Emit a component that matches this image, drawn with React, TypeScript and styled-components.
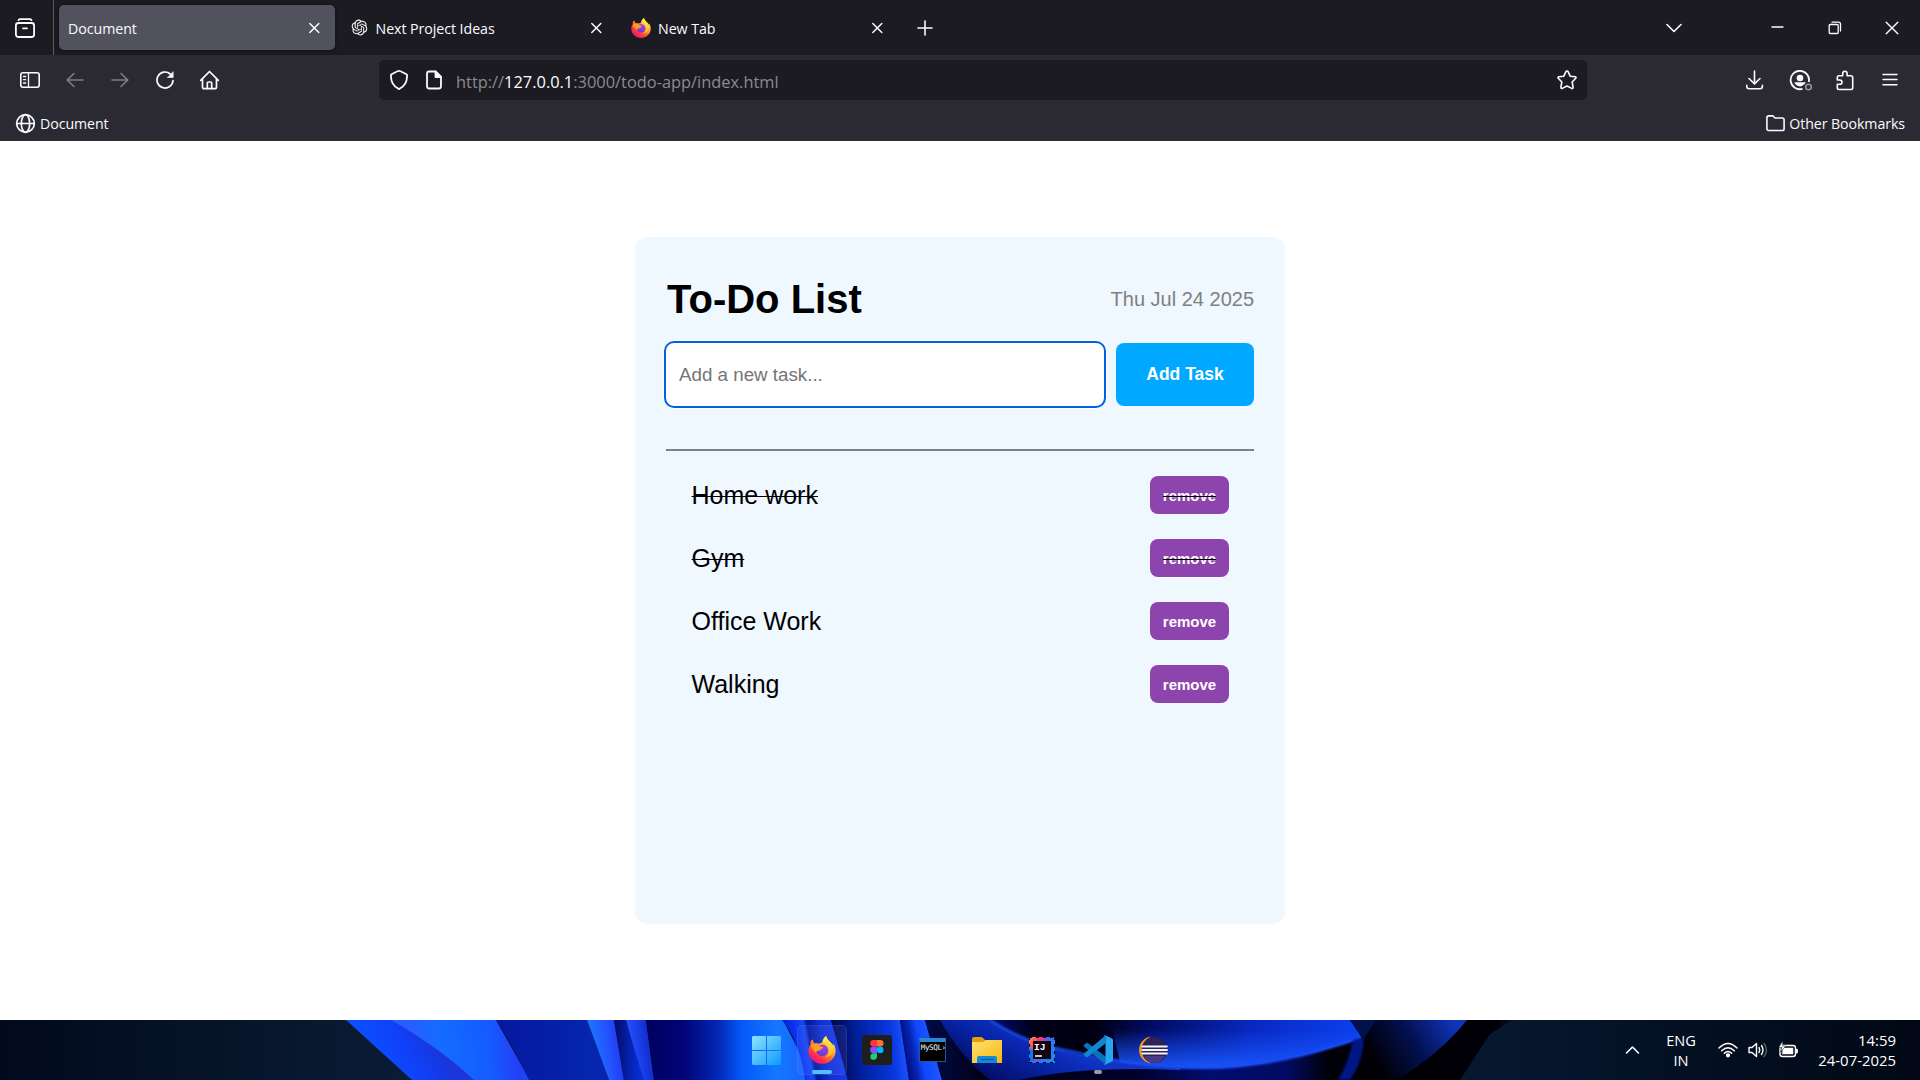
import React from "react";
import styled, { createGlobalStyle } from "styled-components";
import { RiOpenaiFill } from "react-icons/ri";

const ui = '"Open Sans", "Noto Sans", sans-serif';
const arial = '"Liberation Sans", Arial, sans-serif';

const GlobalStyle = createGlobalStyle`
  * { box-sizing: border-box; }
  body { margin: 0; background: #fff; font-family: ${arial}; overflow: hidden; }
  svg { display: block; flex: none; }
`;

const Screen = styled.div`
  width: 1920px;
  height: 1080px;
  display: flex;
  flex-direction: column;
  background: #fff;
`;

/* ---------- browser chrome ---------- */

const TabStrip = styled.header`
  height: 55px;
  display: flex;
  align-items: center;
  background: #1c1b22;
  color: #fbfbfe;
`;

const ViewButton = styled.div`
  width: 54px;
  height: 55px;
  display: flex;
  align-items: center;
  padding: 2px 0 0 15px;
  border-right: 1px solid #5a5a62;
  margin-right: 5px;
`;

const Tab = styled.div<{ $active?: boolean }>`
  width: 276px;
  height: 45px;
  margin-right: 5.5px;
  padding: 0 13px 0 9px;
  display: flex;
  align-items: center;
  gap: 7px;
  border-radius: 5px;
  background: ${(p) => (p.$active ? "#52525e" : "transparent")};
  box-shadow: ${(p) => (p.$active ? "0 0 4px rgba(0, 0, 0, 0.5)" : "none")};
`;

const TabTitle = styled.span`
  flex: 1;
  font: 14.2px/20px ${ui};
  letter-spacing: -0.05px;
  padding-top: 2px;
`;

const NewTab = styled.div`
  padding: 1px 0 0 13px;
`;

const WindowControls = styled.div`
  display: flex;
  align-items: center;
  margin-left: auto;
`;

const ControlCell = styled.div<{ $w: number }>`
  width: ${(p) => p.$w}px;
  display: flex;
  justify-content: center;
`;

const Toolbar = styled.div`
  height: 50px;
  display: flex;
  align-items: center;
  padding: 0 7.5px;
  background: #2b2a33;
  color: #fbfbfe;
`;

const ToolButton = styled.div<{ $dim?: boolean }>`
  width: 45px;
  height: 40px;
  display: flex;
  align-items: center;
  justify-content: center;
  color: ${(p) => (p.$dim ? "#7f7e86" : "#fbfbfe")};
`;

const UrlBar = styled.div`
  width: 1208px;
  height: 40px;
  margin: 0 auto 0 146.5px;
  padding: 0 10px;
  display: flex;
  align-items: center;
  border-radius: 5px;
  background: #1c1b22;
`;

const UrlText = styled.div`
  flex: 1;
  margin-left: -3px;
  padding-top: 3px;
  font: 16.4px/24px ${ui};
  color: #8b8a91;
  b { font-weight: 400; color: #fbfbfe; }
`;

const UrlIcon = styled.div`
  width: 35px;
  display: flex;
`;

const Bookmarks = styled.div`
  height: 36px;
  display: flex;
  justify-content: space-between;
  padding: 0 15px;
  background: #2b2a33;
  color: #fbfbfe;
`;

const Bookmark = styled.div`
  display: flex;
  align-items: center;
  height: 37px;
  gap: 4px;
  font: 14.2px/20px ${ui};
  letter-spacing: -0.08px;
`;

/* ---------- to-do page ---------- */

const Page = styled.main`
  flex: 1;
  display: flex;
  justify-content: center;
  padding-top: 96px;
`;

const Card = styled.section`
  width: 650px;
  height: 687px;
  padding: 39px 31px 0;
  border-radius: 12.5px;
  background: #eff7ff;
`;

const CardHead = styled.div`
  height: 46px;
  display: flex;
  align-items: center;
  justify-content: space-between;
`;

const Title = styled.h1`
  margin: 0 0 0 1px;
  font: 700 40px/46px ${arial};
`;

const DateText = styled.span`
  font: 20px/24px ${arial};
  color: gray;
`;

const Form = styled.div`
  display: flex;
  justify-content: space-between;
  margin-top: 21px;
`;

const TaskInput = styled.input`
  width: 438px;
  height: 63px;
  border: 0;
  padding: 0 13px;
  border-radius: 8px;
  background: #fff;
  font: 18.75px ${arial};
  outline: 2px solid #0060df;
  box-shadow: 0 0 0 3px rgba(255, 255, 255, 0.8);
  &::placeholder { color: #757575; opacity: 1; }
`;

const AddButton = styled.button`
  width: 138px;
  height: 63px;
  border: 0;
  padding: 0 0 1px;
  border-radius: 8px;
  background: #00a8ff;
  color: #fff;
  font: 700 17.5px ${arial};
`;

const Divider = styled.hr`
  height: 2px;
  margin: 43px 0 0;
  border: 0;
  background: gray;
`;

const List = styled.ul`
  list-style: none;
  margin: 12.5px 0 0;
  padding: 0;
`;

const Item = styled.li`
  height: 63px;
  padding: 0 25px 0 25.5px;
  display: flex;
  align-items: center;
  justify-content: space-between;
  font: 25px/29px ${arial};
  color: #000;
`;

const Label = styled.span<{ $done: boolean }>`
  text-decoration: ${(p) => (p.$done ? "line-through 1px #000" : "none")};
`;

const RemoveButton = styled.button<{ $done: boolean }>`
  width: 79px;
  height: 38px;
  border: 0;
  padding: 1px 0 0;
  border-radius: 8px;
  background: #8e44ad;
  color: #fff;
  font: 700 15px ${arial};
  text-decoration: ${(p) => (p.$done ? "line-through 1px #000" : "none")};
`;

/* ---------- taskbar ---------- */

const Taskbar = styled.footer`
  position: relative;
  height: 60px;
  display: flex;
  align-items: center;
  color: #fff;
  background: #020a18;
`;

const Wallpaper = styled.svg`
  position: absolute;
  inset: 0;
`;

const Apps = styled.div`
  position: relative;
  display: flex;
  margin-left: 739.4px;
`;

const AppCell = styled.div<{ $active?: boolean }>`
  width: 50px;
  height: 50px;
  margin: 0 2.55px;
  display: grid;
  place-items: center;
  border-radius: 5px;
  position: relative;
  background: ${(p) => (p.$active ? "rgba(120, 150, 255, 0.13)" : "transparent")};
  box-shadow: ${(p) => (p.$active ? "inset 0 0 0 1px rgba(255, 255, 255, 0.07)" : "none")};
`;

const Indicator = styled.i<{ $w: number; $color: string }>`
  position: absolute;
  bottom: 1px;
  left: calc(50% - ${(p) => p.$w / 2}px);
  width: ${(p) => p.$w}px;
  height: 4px;
  border-radius: 2px;
  background: ${(p) => p.$color};
`;

const MySqlWindow = styled.div`
  width: 27px;
  height: 24px;
  border: 1px solid #23588f;
  border-top: 4px solid #2b86cf;
  background: #000;
  color: #f4f4f4;
  font: 7.6px/11px "DejaVu Sans Mono", monospace;
  letter-spacing: -0.4px;
  overflow: hidden;
  white-space: nowrap;
  padding-left: 1px;
`;

const Tray = styled.div`
  position: relative;
  display: flex;
  align-items: center;
  margin-left: auto;
  padding-right: 24px;
  font: 14.9px/20px ${ui};
`;

const Language = styled.div`
  width: 40px;
  margin: 0 17px 0 21px;
  text-align: center;
  font-size: 14.6px;
`;

const Clock = styled.div`
  width: 84px;
  margin-left: 14px;
  text-align: right;
  white-space: nowrap;
`;

const TrayIcons = styled.div`
  display: flex;
  align-items: center;
  gap: 10px;
`;

/* ---------- icons ---------- */

type IconProps = { w: number; h?: number; sw?: number; children: React.ReactNode };

const Icon = ({ w, h = w, sw = 1.6, children }: IconProps) => (
  <svg width={w} height={h} viewBox={`0 0 ${w} ${h}`} fill="none" stroke="currentColor" strokeWidth={sw} strokeLinecap="round" strokeLinejoin="round">
    {children}
  </svg>
);

const CloseIcon = () => (
  <Icon w={16} sw={1.5}><path d="M3.800 3.500l9 9M12.800 3.500l-9 9" /></Icon>
);

const Firefox = ({ size, id }: { size: number; id: string }) => (
  <svg width={size} height={size} viewBox="0 0 32 32">
    <defs>
      <linearGradient id={`${id}a`} x1="0.85" y1="0.1" x2="0.2" y2="0.95">
        <stop offset="0" stopColor="#fff44f" />
        <stop offset="0.3" stopColor="#ffb62a" />
        <stop offset="0.55" stopColor="#ff6a2c" />
        <stop offset="0.8" stopColor="#ff2a52" />
        <stop offset="1" stopColor="#e3158c" />
      </linearGradient>
      <radialGradient id={`${id}b`} cx="0.6" cy="0.3" r="0.8">
        <stop offset="0" stopColor="#a03cf0" />
        <stop offset="1" stopColor="#5b3cd0" />
      </radialGradient>
      <linearGradient id={`${id}c`} x1="0.5" y1="0" x2="0.5" y2="1">
        <stop offset="0" stopColor="#fff04a" />
        <stop offset="1" stopColor="#ffb52c" />
      </linearGradient>
    </defs>
    <path fill={`url(#${id}a)`} d="M3 6c-.3 1.400-.3 2.600 0 4C1.200 12.300.3 15 .5 18c.6 8 7.300 13.800 15.500 13.800S31.500 25.500 31.500 17c0-3.200-1-6.500-3-8.600.4 1 .4 1.700.4 2.600C26.500 6.500 21.500 5 20.800 0c-2.600 1.800-4.200 4.500-4.300 7.600-1.500 0-3 .5-4 1.200-2-.6-3.500-.5-4.800-.1C6.300 7.500 5.700 5.500 5.500 4 4.400 4.500 3.600 5.200 3 6z" />
    <circle cx="16.300" cy="16.500" r="6.600" fill={`url(#${id}b)`} />
    <path fill={`url(#${id}c)`} d="M20.800 0c-2.600 1.800-4.200 4.500-4.300 7.600 4 .4 7.200 3.900 7.500 8.400.3 4-2 7-4.500 8.500 6-.5 9.500-5.500 9-11.500C27.500 6.500 21.500 5 20.800 0z" />
    <path fill="#ff9a26" d="M3 10c3-1.600 6.500-1.700 9.500-.6 1 2.600 3 2.800 5 3.300-.5 2.600-3.700 2.500-4.500 4.300-1.200-.2-3.800 0-4.200 2.400C7 16 3.600 15 3 10z" />
  </svg>
);

const Windows = () => (
  <svg width="29" height="29" viewBox="0 0 29 29">
    <defs>
      <linearGradient id="win" x1="0" y1="0" x2="29" y2="29" gradientUnits="userSpaceOnUse">
        <stop offset="0" stopColor="#8fe3ff" />
        <stop offset="1" stopColor="#0c9aff" />
      </linearGradient>
    </defs>
    <path fill="url(#win)" d="M1 0h13v14H0V1zM15 0h13l1 1v13H15zM0 15h14v14H1l-1-1zM15 15h14v13l-1 1H15z" />
  </svg>
);

const Figma = () => (
  <svg width="30" height="30" viewBox="0 0 30 30">
    <rect width="30" height="30" rx="2.500" fill="#1e1e1e" />
    <path fill="#ff3737" d="M15 5h-3.500a3.300 3.300 0 0 0 0 6.600H15z" />
    <path fill="#ff7237" d="M15 5h3.200a3.300 3.300 0 0 1 0 6.600H15z" />
    <path fill="#874fff" d="M15 11.600h-3.500a3.300 3.300 0 0 0 0 6.600H15z" />
    <circle cx="18.200" cy="14.900" r="3.300" fill="#00b6ff" />
    <path fill="#24cb71" d="M15 18.200h-3.500a3.300 3.300 0 1 0 3.500 3.300z" />
  </svg>
);

const MySql = () => <MySqlWindow>MySQL›</MySqlWindow>;

const Folder = () => (
  <svg width="30" height="26" viewBox="0 0 30 26">
    <defs>
      <linearGradient id="fold" x1="0" y1="0" x2="1" y2="1">
        <stop offset="0" stopColor="#ffe072" />
        <stop offset="1" stopColor="#f9b90f" />
      </linearGradient>
    </defs>
    <path fill="#e3a008" d="M0 2q0-2 2-2h7q1 0 2 1l2 2v6H0z" />
    <path fill="url(#fold)" d="M0 5h10q1.500 0 2.500-1l1-1H30v23H0z" />
    <path fill="#1389d8" d="M5 26v-5q0-2 2-2h16q2 0 2 2v5z" />
    <path stroke="#0b5592" strokeWidth="1" d="M9 22.500h13" />
  </svg>
);

const IntelliJ = () => (
  <svg width="26" height="26" viewBox="0 0 26 26">
    <defs>
      <linearGradient id="ij" x1="0" y1="0.200" x2="1" y2="0.700">
        <stop offset="0" stopColor="#ff7a45" />
        <stop offset="0.300" stopColor="#fe2d78" />
        <stop offset="0.550" stopColor="#3b6cf0" />
        <stop offset="1" stopColor="#1b8cf6" />
      </linearGradient>
    </defs>
    <rect width="26" height="26" fill="url(#ij)" />
    <path d="M0 11l5 2v13H0z" fill="#1478f0" />
    <rect x="4" y="4" width="18" height="18" fill="#12040f" />
    <path d="M0 25.500h26M0 .5h26M.5 0v26M25.500 0v26" stroke="#050a28" strokeWidth="1.200" strokeDasharray="3 4" />
    <text x="5" y="13" fill="#fff" fontFamily="Liberation Mono, monospace" fontWeight="700" fontSize="9.500">IJ</text>
    <path d="M6 19h7" stroke="#fff" strokeWidth="1.500" />
  </svg>
);

const VsCode = () => (
  <svg width="30" height="30" viewBox="0 0 30 30">
    <path fill="#0a72bd" d="M1 9.800L3.300 8q.7-.5 1.500 0L22.500 21.500V29.500L1 11.500q-.8-.8 0-1.700z" />
    <path fill="#1287d0" d="M1 20.200L3.300 22q.7.500 1.500 0L22.500 8.500V.5L1 18.500q-.8.800 0 1.700z" />
    <path fill="#27a6ef" d="M22 .3l7 3.200q1 .5 1 1.500v20q0 1-1 1.500l-7 3.200q-1 0-1.500-.7 1.500.5 2-1V2q-.5-1.500-2-1 .500-.7 1.500-.7z" />
  </svg>
);

const Eclipse = () => (
  <svg width="30" height="28" viewBox="0 0 30 28">
    <path fill="#f7941e" d="M13 .5A13.600 13.600 0 0 0 13 27.500 15 15 0 0 1 13 .5z" />
    <circle cx="16.500" cy="14" r="13" fill="#2c2255" />
    <path d="M6 20h21q-4 6.500-10.500 7Q9 26.500 6 20z" fill="#493a86" />
    <path d="M3.600 10.500h26M3.400 14h26.300M3.600 17.500h26" stroke="#f4f2fa" strokeWidth="1.900" />
  </svg>
);

const WallpaperArt = () => (
  <Wallpaper width="1920" height="60" viewBox="0 0 1920 60" preserveAspectRatio="none">
    <defs>
      <linearGradient id="w0"><stop offset="0" stopColor="#020a1c" /><stop offset="1" stopColor="#0a1d36" /></linearGradient>
      <linearGradient id="wA" gradientUnits="userSpaceOnUse" x1="380" y1="40" x2="430" y2="10"><stop offset="0" stopColor="#0b4dff" /><stop offset="0.500" stopColor="#1040f8" /><stop offset="1" stopColor="#1a35d8" /></linearGradient>
      <linearGradient id="wB" gradientUnits="userSpaceOnUse" x1="410" y1="30" x2="515" y2="20"><stop offset="0" stopColor="#2a5cff" /><stop offset="0.300" stopColor="#146cff" /><stop offset="0.750" stopColor="#145cff" /><stop offset="1" stopColor="#2440f5" /></linearGradient>
      <linearGradient id="wC" gradientUnits="userSpaceOnUse" x1="500" y1="0" x2="610" y2="0"><stop offset="0" stopColor="#0618a0" /><stop offset="1" stopColor="#0428b0" /></linearGradient>
      <linearGradient id="wD" gradientUnits="userSpaceOnUse" x1="590" y1="30" x2="622" y2="26"><stop offset="0" stopColor="#1c78ff" /><stop offset="0.500" stopColor="#2458ff" /><stop offset="1" stopColor="#2038f0" /></linearGradient>
      <linearGradient id="wE" gradientUnits="userSpaceOnUse" x1="618" y1="0" x2="650" y2="0"><stop offset="0" stopColor="#02107a" /><stop offset="0.500" stopColor="#0428c0" /><stop offset="1" stopColor="#1038e0" /></linearGradient>
      <linearGradient id="wF" gradientUnits="userSpaceOnUse" x1="630" y1="30" x2="652" y2="27"><stop offset="0" stopColor="#2452ff" /><stop offset="1" stopColor="#1028c8" /></linearGradient>
      <linearGradient id="wG" gradientUnits="userSpaceOnUse" x1="645" y1="0" x2="800" y2="0"><stop offset="0" stopColor="#00005c" /><stop offset="0.250" stopColor="#000478" /><stop offset="0.480" stopColor="#0428b8" /><stop offset="0.620" stopColor="#0458f8" /><stop offset="0.850" stopColor="#1478ff" /><stop offset="1" stopColor="#1868ff" /></linearGradient>
      <linearGradient id="wH" gradientUnits="userSpaceOnUse" x1="783" y1="30" x2="837" y2="20"><stop offset="0" stopColor="#0518b8" /><stop offset="0.250" stopColor="#0830f0" /><stop offset="0.450" stopColor="#1848f0" /><stop offset="0.520" stopColor="#03169a" /><stop offset="0.750" stopColor="#1030d0" /><stop offset="1" stopColor="#1838e8" /></linearGradient>
      <linearGradient id="wI" gradientUnits="userSpaceOnUse" x1="834" y1="20" x2="905" y2="12"><stop offset="0" stopColor="#000850" /><stop offset="0.350" stopColor="#0020a0" /><stop offset="0.800" stopColor="#0838e0" /><stop offset="1" stopColor="#1c54ff" /></linearGradient>
      <linearGradient id="wJ" gradientUnits="userSpaceOnUse" x1="903" y1="30" x2="934" y2="24"><stop offset="0" stopColor="#020c80" /><stop offset="0.300" stopColor="#0624b0" /><stop offset="0.550" stopColor="#1048ff" /><stop offset="1" stopColor="#1c58ff" /></linearGradient>
      <linearGradient id="wK" gradientUnits="userSpaceOnUse" x1="925" y1="0" x2="990" y2="0"><stop offset="0" stopColor="#020a48" /><stop offset="1" stopColor="#000010" /></linearGradient>
      <linearGradient id="wL" gradientUnits="userSpaceOnUse" x1="985" y1="60" x2="1015" y2="0"><stop offset="0" stopColor="#020c60" /><stop offset="0.600" stopColor="#0824a8" /><stop offset="1" stopColor="#1034c8" /></linearGradient>
      <linearGradient id="wM" gradientUnits="userSpaceOnUse" x1="990" y1="0" x2="1360" y2="40"><stop offset="0" stopColor="#020c78" /><stop offset="0.120" stopColor="#000018" /><stop offset="0.280" stopColor="#000010" /><stop offset="0.420" stopColor="#010a60" /><stop offset="0.700" stopColor="#0828c0" /><stop offset="1" stopColor="#0c40f0" /></linearGradient>
      <linearGradient id="wMs" x1="0" y1="0" x2="0" y2="1"><stop offset="0.200" stopColor="#1a58ff" stopOpacity="0" /><stop offset="1" stopColor="#1a58ff" stopOpacity="0.950" /></linearGradient>
      <linearGradient id="wN" gradientUnits="userSpaceOnUse" x1="1040" y1="0" x2="1350" y2="0"><stop offset="0" stopColor="#000018" /><stop offset="0.300" stopColor="#000028" /><stop offset="0.550" stopColor="#020c70" /><stop offset="0.800" stopColor="#010a60" /><stop offset="0.930" stopColor="#000008" /></linearGradient>
      <linearGradient id="wO" gradientUnits="userSpaceOnUse" x1="1380" y1="50" x2="1455" y2="5"><stop offset="0" stopColor="#000006" /><stop offset="0.500" stopColor="#031050" /><stop offset="1" stopColor="#1034b8" /></linearGradient>
      <linearGradient id="wP" gradientUnits="userSpaceOnUse" x1="1470" y1="0" x2="1920" y2="0"><stop offset="0" stopColor="#07182e" /><stop offset="0.200" stopColor="#06142c" /><stop offset="0.500" stopColor="#031022" /><stop offset="1" stopColor="#020815" /></linearGradient>
      <filter id="soft" x="-10%" y="-30%" width="120%" height="160%"><feGaussianBlur stdDeviation="1.200" /></filter>
    </defs>
    <rect width="420" height="60" fill="url(#w0)" />
    <path fill="url(#wA)" d="M346 0h50l90 60h-74z" />
    <path fill="url(#wB)" d="M391 0Q440 28 474 60h56L496 0z" />
    <path fill="url(#wC)" d="M496 0Q514 28 529 60h80L587 0z" />
    <path fill="url(#wD)" d="M587 0l22 60h15L614 0z" />
    <path fill="url(#wE)" d="M614 0l10 60h21L626 0z" />
    <path fill="url(#wF)" d="M626 0Q632 22 644 60h10L646 0z" />
    <path fill="url(#wG)" d="M646 0l8 60h160L783 0z" />
    <path fill="url(#wH)" d="M782 0Q800 22 805 60h43L831 0z" />
    <path fill="url(#wI)" d="M831 0l17 60h61L900 0z" />
    <path fill="url(#wJ)" d="M900 0l9 60h33L925 0z" />
    <path fill="url(#wK)" d="M925 0l17 60h60L970 0z" />
    <rect x="1000" width="500" height="60" fill="#000006" />
    <path fill="url(#wN)" d="M990 15h370l-8 45H990z" />
    <path fill="url(#wL)" d="M940 0Q960 36 990 60h30Q1080 46 1180 50L1180 48Q1090 40 1055 28Q1020 20 990 0z" />
    <path fill="url(#wM)" d="M990 0Q1020 20 1055 28C1110 40 1150 48 1200 48C1260 48 1310 35 1362 18L1350 0z" />
    <path fill="url(#wMs)" d="M1110 0L1120 42Q1160 48 1200 48C1260 48 1310 35 1362 18L1350 0z" />
    <path d="M990 0Q1020 20 1055 28C1110 40 1150 48 1200 48C1260 48 1310 35 1360 18" fill="none" stroke="#1a4cf0" strokeWidth="2.500" filter="url(#soft)" />
    <path fill="#02104c" d="M1350 0h26l-12 20z" />
    <path fill="#031484" d="M1353 20l11-2Q1364 40 1350 60h-12Q1348 44 1353 20z" filter="url(#soft)" />
    <path fill="url(#wO)" d="M1376 0h91Q1440 34 1396 60h-44Q1366 36 1364 18z" />
    <path fill="url(#wP)" d="M1512 0h408v60H1460L1490 14z" />
  </Wallpaper>
);

/* ---------- app ---------- */

const tasks = [
  { text: "Home work", done: true },
  { text: "Gym", done: true },
  { text: "Office Work", done: false },
  { text: "Walking", done: false },
];

const BrowserChrome = () => (
  <>
    <TabStrip>
      <ViewButton>
        <Icon w={20} h={22} sw={1.8}>
          <path d="M3.500 2.200q.3-1 1.500-1h10q1.200 0 1.500 1" />
          <rect x="0.900" y="5" width="18.200" height="14" rx="2.500" />
          <path d="M8 10.300h4" />
        </Icon>
      </ViewButton>
      <Tab $active><TabTitle>Document</TabTitle><CloseIcon /></Tab>
      <Tab><RiOpenaiFill size={19} /><TabTitle>Next Project Ideas</TabTitle><CloseIcon /></Tab>
      <Tab><Firefox size={20} id="ft" /><TabTitle>New Tab</TabTitle><CloseIcon /></Tab>
      <NewTab><Icon w={16}><path d="M8 1v14M1 8h14" /></Icon></NewTab>
      <WindowControls>
        <ControlCell $w={60}><Icon w={16}><path d="M1 4.500l7 7 7-7" /></Icon></ControlCell>
        <ControlCell $w={45} />
        <ControlCell $w={57}><Icon w={13} sw={1.300}><path d="M1 6h11" /></Icon></ControlCell>
        <ControlCell $w={58}><Icon w={14} sw={1.300}><rect x="1.200" y="3.500" width="9" height="9" rx="1" /><path d="M4 1.200h6.500q2 0 2 2V10" /></Icon></ControlCell>
        <ControlCell $w={56}><Icon w={14} sw={1.400}><path d="M1.200 1.200l11.600 11.600M12.800 1.200L1.200 12.800" /></Icon></ControlCell>
      </WindowControls>
    </TabStrip>

    <Toolbar>
      <ToolButton>
        <Icon w={20} h={16}><rect x="0.800" y="0.800" width="18.400" height="14.400" rx="2.200" /><path d="M8.500 1v14M3.500 4.500h2.200M3.500 7.700h2.200M3.500 11h2.200" strokeWidth="1.300" /></Icon>
      </ToolButton>
      <ToolButton $dim><Icon w={18} h={16}><path d="M17 8H1.500M8 1.500L1.200 8 8 14.500" /></Icon></ToolButton>
      <ToolButton $dim><Icon w={18} h={16}><path d="M1 8h15.500M10 1.500L16.800 8 10 14.500" /></Icon></ToolButton>
      <ToolButton>
        <Icon w={18} sw={1.700}><path d="M17 9.500A8 8 0 1 1 14.300 3" /><path d="M17.200 1v5.500h-5.500z" fill="currentColor" strokeWidth="0.600" /></Icon>
      </ToolButton>
      <ToolButton>
        <Icon w={20} sw={1.700}><path d="M.7 10.300l8.800-8.800 8.800 8.800M2.500 9v8q0 1.700 1.700 1.700h10.600q1.700 0 1.700-1.700V9" /><path d="M7.300 18.500v-5.500q0-1 1-1h2.400q1 0 1 1v5.500" /></Icon>
      </ToolButton>
      <UrlBar>
        <UrlIcon><Icon w={20} sw={1.8}><path d="M10 .9q1 0 4 1.600t4 2.200q.3 5-1.500 8.500Q14.500 17 10 19.100 5.500 17 3.500 13.200 1.700 9.700 2 4.700 3 4.100 6 2.500T10 .9z" /></Icon></UrlIcon>
        <UrlIcon><Icon w={20} sw={1.8}><path d="M11.500 1.500H5.200Q3 1.500 3 3.700v12.600q0 2.200 2.200 2.200h9.600q2.200 0 2.200-2.200V7z" /><path d="M11.500 1.500L17 7h-5.500z" fill="currentColor" /></Icon></UrlIcon>
        <UrlText>http://<b>127.0.0.1</b>:3000/todo-app/index.html</UrlText>
        <Icon w={20}><path d="M10 1q.8 0 1.200.8l2 4.400 5 .6q1.400.4.500 1.500L15.200 12l.9 5.300q0 1.600-1.400 1.100L10 16l-4.700 2.400q-1.400.5-1.400-1.100L4.800 12 1.300 8.300Q.4 7.200 1.800 6.800l5-.6 2-4.400Q9.200 1 10 1z" /></Icon>
      </UrlBar>
      <ToolButton><Icon w={18} h={20}><path d="M8.500 1v12.500M3 8.500l5.500 5.300L14 8.500M.8 15.200v1.300q0 2.200 2.200 2.200h11.200q2.200 0 2.200-2.200v-1.300" /></Icon></ToolButton>
      <ToolButton>
        <svg width="24" height="21" viewBox="-1 0 24 21" fill="none">
          <path d="M19.800 12A9.200 9.200 0 1 0 13.500 18.800" stroke="#fbfbfe" strokeWidth="1.800" />
          <circle cx="11" cy="8" r="3.300" fill="#fbfbfe" />
          <path d="M5.300 12.300h11.500q-.5 1.500-2 2.300-.8 1.800-3.800 1.800-4 0-5.700-4.100z" fill="#fbfbfe" />
          <circle cx="19.500" cy="17" r="2.800" stroke="#97969d" strokeWidth="1.500" />
        </svg>
      </ToolButton>
      <ToolButton>
        <Icon w={20} h={21}><path d="M4 5.800h3.700V3.600q0-2.400 2.200-2.400t2.200 2.400v2.200H16q1.700 0 1.700 1.700v10.300q0 1.700-1.700 1.700H4q-1.700 0-1.700-1.700v-3.500h2.400q2.300 0 2.300-2.100T4.700 10H2.300V7.500Q2.300 5.800 4 5.800z" /></Icon>
      </ToolButton>
      <ToolButton><Icon w={16} h={14} sw={1.500}><path d="M1 1.500h14M1 6.500h14M1 11.700h14" /></Icon></ToolButton>
    </Toolbar>

    <Bookmarks>
      <Bookmark>
        <Icon w={21} sw={1.7}><circle cx="10.500" cy="10.500" r="8.800" /><ellipse cx="10.500" cy="10.500" rx="4.200" ry="8.800" /><path d="M1.700 10.500h17.600" /></Icon>
        Document
      </Bookmark>
      <Bookmark>
        <Icon w={19} h={17}><path d="M.9 13.500V2.700Q.9.900 2.700.9h3.600q.8 0 1.300.6L9 3h7.300q1.800 0 1.800 1.800v8.900q0 1.800-1.800 1.800H2.900q-2 0-2-2z" /></Icon>
        Other Bookmarks
      </Bookmark>
    </Bookmarks>
  </>
);

const TodoCard = () => (
  <Card>
    <CardHead>
      <Title>To-Do List</Title>
      <DateText>Thu Jul 24 2025</DateText>
    </CardHead>
    <Form>
      <TaskInput placeholder="Add a new task..." />
      <AddButton>Add Task</AddButton>
    </Form>
    <Divider />
    <List>
      {tasks.map((t) => (
        <Item key={t.text}>
          <Label $done={t.done}>{t.text}</Label>
          <RemoveButton $done={t.done}>remove</RemoveButton>
        </Item>
      ))}
    </List>
  </Card>
);

const DesktopTaskbar = () => (
  <Taskbar>
    <WallpaperArt />
    <Apps>
      <AppCell><Windows /></AppCell>
      <AppCell $active><Firefox size={28} id="fb" /><Indicator $w={20} $color="#4cc2ff" /></AppCell>
      <AppCell><Figma /></AppCell>
      <AppCell><MySql /></AppCell>
      <AppCell><Folder /></AppCell>
      <AppCell><IntelliJ /></AppCell>
      <AppCell><VsCode /><Indicator $w={8} $color="#9a9a9a" /></AppCell>
      <AppCell><Eclipse /></AppCell>
    </Apps>
    <Tray>
      <Icon w={15} h={10}><path d="M1.500 8l6-6 6 6" /></Icon>
      <Language>ENG<br />IN</Language>
      <TrayIcons>
        <Icon w={20} h={16} sw={1.500}>
          <path d="M1 6q9-9 18 0M3.700 8.700q6.300-6 12.600 0M6.300 11.300q3.700-3.600 7.400 0" />
          <circle cx="10" cy="13.300" r="1.400" fill="currentColor" />
        </Icon>
        <Icon w={20} h={16} sw={1.400}>
          <path d="M1 5.500h3L8.500 1.500v13L4 10.500H1zM11 5.500q1.600 2.500 0 5M13.500 3.500q3 4.500 0 9" />
          <path d="M16 1.500q5 6.500 0 13" opacity="0.350" />
        </Icon>
        <Icon w={20} h={18} sw={1.400}>
          <rect x="2" y="4.500" width="15.500" height="11" rx="2.500" />
          <rect x="4.500" y="7" width="10.500" height="6" fill="currentColor" strokeWidth="0.500" />
          <path d="M18.900 8.800v2.600" strokeWidth="2" />
          <path d="M4.500 0L.8 6.500h3L2.500 11 7.800 5H4.900z" fill="currentColor" stroke="#020c1c" strokeWidth="0.500" />
        </Icon>
      </TrayIcons>
      <Clock>14:59<br />24-07-2025</Clock>
    </Tray>
  </Taskbar>
);

export default function App() {
  return (
    <>
      <GlobalStyle />
      <Screen>
        <BrowserChrome />
        <Page><TodoCard /></Page>
        <DesktopTaskbar />
      </Screen>
    </>
  );
}
